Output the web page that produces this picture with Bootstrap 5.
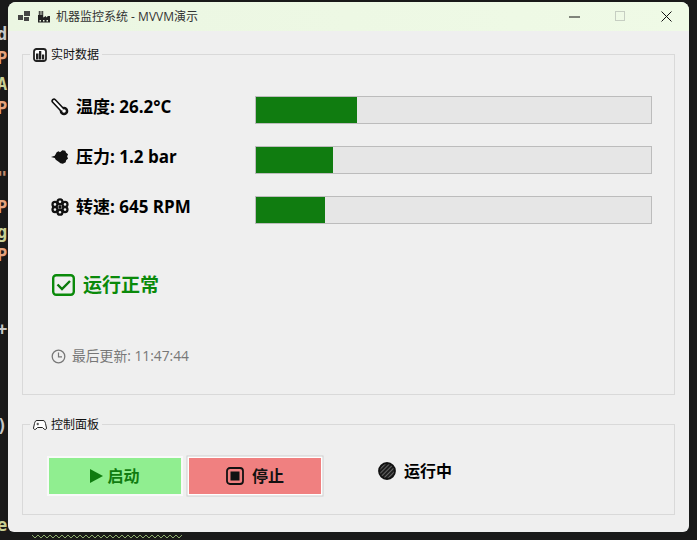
<!DOCTYPE html>
<html lang="zh"><head><meta charset="utf-8"><title>机器监控系统 - MVVM演示</title>
<link href="https://cdn.jsdelivr.net/npm/bootstrap@5.3.0/dist/css/bootstrap.min.css" rel="stylesheet">
<style>
html,body{height:100%}
body{background:#1a1a1a;font-family:"Open Sans","Noto Sans CJK SC",sans-serif;overflow:hidden;color:#000;position:relative}
.peek{position:absolute;left:-3px;font:700 17px/20px "DejaVu Sans Mono",monospace;width:11px;overflow:hidden}
.squiggle{position:absolute;left:32px;top:533px}
.app{position:absolute;left:8px;top:2px;width:681px;height:530px;background:#efefef;border-radius:8px 8px 6px 6px;overflow:hidden}
.tbar{height:29px;background:linear-gradient(90deg,#ebf6e2,#effae6);font-size:12px;color:#333}
.tbar-title{margin-left:6px}
.tico{margin-left:10px}
.tico2{margin-left:7px}
.tbtn{width:46px;height:29px}
.content{padding:23px 14px 0 14px}
.gbox{position:relative;border:1px solid #d9d9d9}
.gbox-a{height:341px;padding:30px 22px 0 28px}
.gbox-b{height:91px;margin-top:29px;padding:12px 0 0 26px}
.gtitle{position:absolute;left:7px;top:-9px;background:#efefef;padding:0 3px;font-size:12px;line-height:18px;color:#111}
.metric{height:50px;padding-bottom:1px}
.mlabel{width:204px;font-size:17px;font-weight:700;line-height:24px;padding-bottom:6px}
.mlabel svg{margin-right:7px}
.mbar{height:28px;width:397px;border:1px solid #bcbcbc;background:#e6e6e6;border-radius:0}
.mbar .progress-bar{background:#107c10}
.okline{margin-top:37px;height:26px;font-size:19px;font-weight:700;color:#0a8a0a}
.okline svg{margin-left:1px}
.stamp{margin-top:48px;font-size:13.800px;color:#777;height:20px;gap:6px}
.pbtn{width:132px;height:36px;border:0;border-radius:0;font-size:16px;font-weight:700;padding:0}
.pbtn-go{background:#90ee90;color:#107c10;box-shadow:0 0 0 2px #f9f9f9}
.pbtn-go:hover{background:#90ee90;color:#107c10}
.pbtn-stop{background:#f08080;color:#111;box-shadow:0 0 0 1.500px #fff,0 0 0 2.500px #cfcfcf;margin-left:8px}
.pbtn-stop:hover{background:#f08080;color:#111}
.runstate{margin-left:57px;margin-bottom:10px;font-size:16px;font-weight:700}
</style></head>
<body>
<span class="peek" style="top:24px;color:#c8c8c8">d</span>
<span class="peek" style="top:48px;color:#e6a37d">P</span>
<span class="peek" style="top:74px;color:#c9cf94">A</span>
<span class="peek" style="top:98px;color:#e6a37d">P</span>
<span class="peek" style="top:168px;color:#c08d70">"</span>
<span class="peek" style="top:197px;color:#e6a37d">P</span>
<span class="peek" style="top:222px;color:#c9cf94">g</span>
<span class="peek" style="top:245px;color:#e6a37d">P</span>
<span class="peek" style="top:319px;color:#c8c8c8">+</span>
<span class="peek" style="top:416px;color:#c8c8c8">)</span>
<span class="peek" style="top:515px;color:#c9cf94">e</span>
<svg class="squiggle" width="152" height="6" viewBox="0 0 152 6" aria-hidden="true"><path d="M0 2 3 5 6 2 9 5 12 2 15 5 18 2 21 5 24 2 27 5 30 2 33 5 36 2 39 5 42 2 45 5 48 2 51 5 54 2 57 5 60 2 63 5 66 2 69 5 72 2 75 5 78 2 81 5 84 2 87 5 90 2 93 5 96 2 99 5 102 2 105 5 108 2 111 5 114 2 117 5 120 2 123 5 126 2 129 5 132 2 135 5 138 2 141 5 144 2 147 5 150 2" fill="none" stroke="#8fae6e"/></svg>

<div class="app shadow-sm">
 <div class="tbar d-flex align-items-center">
  <svg class="tico" width="13" height="12" viewBox="0 0 13 12"><path fill="#444" d="M0 4h5v5H0zM6 0h6v5H6zM6 6h5v4H6z"/></svg>
  <svg class="tico2" width="12" height="13" viewBox="0 0 12 13"><path fill="#222" d="M0 12.500V5h.8V1h1v4h.7V1h1v4h.7V1h1v6.500L8 6v1.500L10 6h2v6.500zM1.500 10v1.500h1.500V10zM5 10v1.500h1.500V10zM8.500 10v1.500H10V10z"/></svg>
  <span class="tbar-title">机器监控系统 - MVVM演示</span>
  <div class="ms-auto d-flex">
   <div class="tbtn d-flex align-items-center justify-content-center"><svg width="11" height="2"><path d="M0 1h11" stroke="#111"/></svg></div>
   <div class="tbtn d-flex align-items-center justify-content-center"><svg width="11" height="11"><rect x=".5" y=".5" width="9" height="9" fill="none" stroke="#c6cec2"/></svg></div>
   <div class="tbtn d-flex align-items-center justify-content-center"><svg width="11" height="11"><path d="M.5.500l10 10M10.500.500l-10 10" stroke="#111" fill="none"/></svg></div>
  </div>
 </div>
 <div class="content">
  <div class="gbox gbox-a">
   <div class="gtitle d-flex align-items-center gap-1">
    <svg width="14" height="14" viewBox="0 0 14 14"><rect x="1" y="1" width="12" height="12" rx="2.500" fill="#fff" stroke="#222" stroke-width="1.800"/><path fill="#222" d="M3 5.500h2.500V11.500H3zM6 3h2.300v8.500H6zM9 6.500h2.200v5H9z"/></svg>
    <span>实时数据</span>
   </div>
   <div class="metric d-flex align-items-center">
    <div class="mlabel d-flex align-items-center"><svg width="18" height="18" viewBox="0 0 18 18"><path d="M3 3 11 11.500" stroke="#111" stroke-width="5.200" stroke-linecap="round" fill="none"/><circle cx="13" cy="13" r="4.300" fill="#111"/><path d="M3 3 11 11.500" stroke="#fff" stroke-width="2" stroke-linecap="round" fill="none"/><circle cx="13" cy="13" r="1.800" fill="#fff"/></svg>温度: 26.2°C</div>
    <div class="progress mbar" role="progressbar" aria-label="温度" aria-valuenow="26"><div class="progress-bar" style="width:25.600%"></div></div>
   </div>
   <div class="metric d-flex align-items-center">
    <div class="mlabel d-flex align-items-center"><svg width="18" height="18" viewBox="0 0 19 19"><path fill="#111" d="M0 9.500 4 8.300 6 4.500 8 3.500l1.500 1L12 2.500l3 .5 1 2 2 1.500-1 2.500 1 2-2 2-.5 2-3 1.500-2.500-.5-2-1.500-3-2L4 10.500z"/></svg>压力: 1.2 bar</div>
    <div class="progress mbar" role="progressbar" aria-label="压力" aria-valuenow="19"><div class="progress-bar" style="width:19.400%"></div></div>
   </div>
   <div class="metric d-flex align-items-center">
    <div class="mlabel d-flex align-items-center"><svg width="18" height="18" viewBox="0 0 19 19"><g fill="none" stroke="#111" stroke-width="2.400"><circle cx="9.500" cy="4" r="2.600"/><circle cx="9.500" cy="15" r="2.600"/><circle cx="4.200" cy="6.800" r="2.600"/><circle cx="14.800" cy="6.800" r="2.600"/><circle cx="4.200" cy="12.200" r="2.600"/><circle cx="14.800" cy="12.200" r="2.600"/></g><circle cx="9.500" cy="9.500" r="1.800" fill="#111"/></svg>转速: 645 RPM</div>
    <div class="progress mbar" role="progressbar" aria-label="转速" aria-valuenow="17"><div class="progress-bar" style="width:17.400%"></div></div>
   </div>
   <div class="okline d-flex align-items-center gap-2">
    <svg width="23" height="22" viewBox="0 0 23 22"><rect x="1.200" y="1.200" width="20.600" height="19.600" rx="3" fill="none" stroke="#0a8a0a" stroke-width="2.400"/><path d="M5.500 10.500l4.500 4.500 8-8" fill="none" stroke="#0a7a0a" stroke-width="2.400"/></svg>
    <span>运行正常</span>
   </div>
   <div class="stamp d-flex align-items-center">
    <svg width="15" height="15" viewBox="0 0 15 15"><circle cx="7.500" cy="7.500" r="6.300" fill="none" stroke="#777" stroke-width="1.300"/><path d="M7.500 3.500v4.300h3.500" fill="none" stroke="#777" stroke-width="1.200"/></svg>
    <span>最后更新: 11:47:44</span>
   </div>
  </div>
  <div class="gbox gbox-b d-flex align-items-center">
   <div class="gtitle d-flex align-items-center gap-1">
    <svg width="14" height="12" viewBox="0 0 14 12"><path d="M4 1.500h6c1.500 0 2 1 2.500 3l1 4.500c0 1.500-1.500 2-2.500 1L9.500 8.500h-5L3 10c-1 1-2.500.5-2.500-1l1-4.500c.5-2 1-3 2.500-3z" fill="#fff" stroke="#222"/><path d="M3.500 5h2.500M4.800 3.800v2.500" stroke="#222" stroke-width=".8"/></svg>
    <span>控制面板</span>
   </div>
   <button type="button" class="btn pbtn pbtn-go d-flex align-items-center justify-content-center gap-1"><svg width="13" height="14" viewBox="0 0 13 14"><path fill="#107c10" d="M0 0l13 7-13 7z"/></svg> 启动</button>
   <button type="button" class="btn pbtn pbtn-stop d-flex align-items-center justify-content-center gap-2"><svg width="18" height="18" viewBox="0 0 18 18"><rect x="1" y="1" width="16" height="16" rx="3" fill="none" stroke="#111" stroke-width="1.800"/><rect x="4.500" y="4.500" width="9" height="9" fill="#111"/></svg> 停止</button>
   <div class="runstate d-flex align-items-center gap-2">
    <svg width="18" height="18" viewBox="0 0 18 18"><defs><pattern id="hatch" width="3" height="3" patternUnits="userSpaceOnUse" patternTransform="rotate(45)"><rect width="3" height="3" fill="#1c1c1c"/><rect width="1" height="3" fill="#666"/></pattern></defs><circle cx="9" cy="9" r="8" fill="url(#hatch)" stroke="#111" stroke-width="1.800"/></svg>
    <span>运行中</span>
   </div>
  </div>
 </div>
</div>
</body></html>
